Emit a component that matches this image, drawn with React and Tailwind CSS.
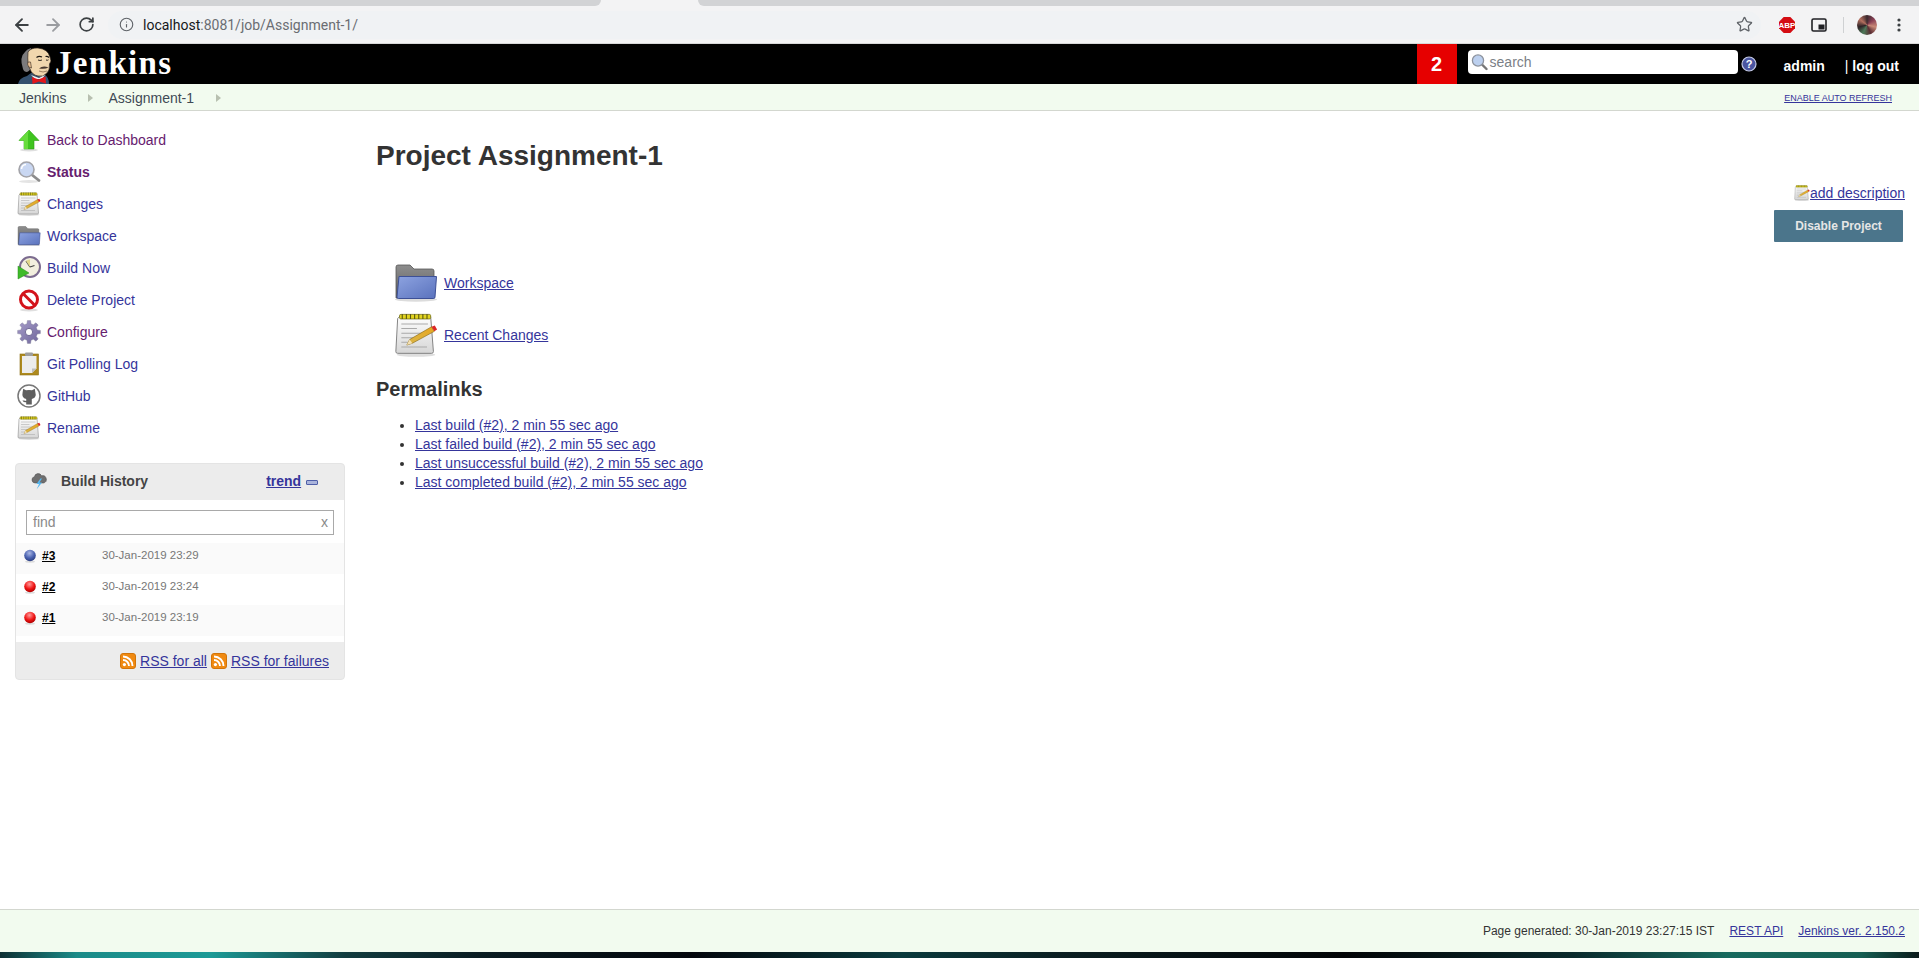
import React from "react";
import { ArrowLeft, ArrowRight, RotateCw, Info, Star } from "lucide-react";

const gearPath = (() => {
  const n = 8, cx = 12, cy = 12, R = 11.5, r = 8.5;
  let d = "";
  for (let i = 0; i < n; i++) {
    const a = (i / n) * Math.PI * 2;
    const s = Math.PI / n;
    const pts = [[r, a - s * 0.62], [R, a - s * 0.36], [R, a + s * 0.36], [r, a + s * 0.62]];
    pts.forEach(([rad, t], j) => {
      d += (i === 0 && j === 0 ? "M" : "L") + (cx + rad * Math.cos(t)).toFixed(2) + " " + (cy + rad * Math.sin(t)).toFixed(2) + " ";
    });
  }
  return d + "Z";
})();

const Notepad = ({ size = 24, className = "" }) => (
  <svg width={size} height={size} viewBox="0 0 48 48" className={className}>
    <defs>
      <linearGradient id="pad" x1="0" y1="0" x2="0" y2="1">
        <stop offset="0" stopColor="#fdfdfd" />
        <stop offset="1" stopColor="#d6d6d6" />
      </linearGradient>
      <linearGradient id="pencil" x1="0" y1="1" x2="1" y2="0">
        <stop offset="0" stopColor="#d9b64a" />
        <stop offset="1" stopColor="#e8a71f" />
      </linearGradient>
    </defs>
    <ellipse cx="24" cy="45.5" rx="21" ry="2.3" fill="#dedede" />
    <path d="M6 4 H40 L43 42 Q43 44 41 44 H4 Q2 44 2 42 L4 6 Z" fill="url(#pad)" stroke="#7a7a7a" strokeWidth="1" />
    <rect x="6" y="1.5" width="34" height="5" rx="1.5" fill="#e2d41f" stroke="#6e6a10" strokeWidth="0.8" />
    <path d="M9 1 V6.5 M13.5 1 V6.5 M18 1 V6.5 M22.5 1 V6.5 M27 1 V6.5 M31.5 1 V6.5 M36 1 V6.5" stroke="#5b5810" strokeWidth="1.2" />
    <path d="M8 12 H37 M8 17 H25 M8 22 H34 M8 27 H22 M8 32 H15 M8 37 H36" stroke="#a9a9a9" strokeWidth="1.1" />
    <path d="M14 35 L17 29 L41 15 L44 20 L20 33 Z" fill="url(#pencil)" stroke="#8a6a16" strokeWidth="0.7" />
    <path d="M14 35 L17 29 L20 33 Z" fill="#f3e0b4" />
    <path d="M41 15 L44 20 L47 18 L44.5 13.5 Z" fill="#dc2626" />
  </svg>
);

const Folder = ({ size = 24, className = "" }) => (
  <svg width={size} height={size * (38 / 44)} viewBox="0 0 44 38" className={className}>
    <defs>
      <linearGradient id="fblue" x1="0" y1="0" x2="1" y2="1">
        <stop offset="0" stopColor="#8da3e0" />
        <stop offset="1" stopColor="#5a72bd" />
      </linearGradient>
      <linearGradient id="fgray" x1="0" y1="0" x2="0" y2="1">
        <stop offset="0" stopColor="#8e8e8e" />
        <stop offset="1" stopColor="#5c5c5c" />
      </linearGradient>
    </defs>
    <ellipse cx="22" cy="35.5" rx="21" ry="2.2" fill="#dcdcdc" />
    <path d="M2 3 Q2 1 4 1 H16 L20 5 H38 Q40 5 40 7 V34 H2 Z" fill="url(#fgray)" stroke="#555" strokeWidth="0.8" />
    <path d="M5 12.5 H42.5 L41 33 Q41 34.5 39.5 34.5 H4.5 Q3 34.5 3 33 Z" fill="url(#fblue)" stroke="#3d5096" strokeWidth="1" />
  </svg>
);

const ArrowUp = () => (
  <svg width="24" height="24" viewBox="0 0 24 24">
    <ellipse cx="12" cy="22" rx="9" ry="1.5" fill="#dfdfdf" />
    <path d="M12 2 L22 12.5 H17 V21 H7 V12.5 H2 Z" fill="#3fc41f" stroke="#2f9c17" strokeWidth="0.6" />
    <path d="M12 2 L2 12.5 H7 V21 H11 V6 Z" fill="#66dc3c" />
  </svg>
);

const Magnifier = () => (
  <svg width="24" height="24" viewBox="0 0 24 24">
    <ellipse cx="12" cy="21.5" rx="10" ry="1.5" fill="#e4e4e4" />
    <path d="M14.5 14.5 L22 20.5" stroke="#8c8c8c" strokeWidth="2.8" strokeLinecap="round" />
    <circle cx="9.5" cy="9.5" r="7.5" fill="#c9d7f2" stroke="#a3a3a8" strokeWidth="1.6" />
    <path d="M4.5 9 A5 5 0 0 1 9 4.5" stroke="#fff" strokeWidth="1.5" fill="none" />
  </svg>
);

const BuildNow = () => (
  <svg width="24" height="24" viewBox="0 0 24 24">
    <circle cx="13" cy="11" r="10" fill="#f2efde" stroke="#7c6c8f" strokeWidth="2" />
    <path d="M13 11 L9 5 M13 11 L17.5 9.5" stroke="#444" strokeWidth="1.2" />
    <path d="M13 11 L9 5 A7.5 7.5 0 0 1 13 3.5 Z" fill="#e2d88c" />
    <path d="M1 10 L12 17 L1 23 Z" fill="#3fbb2a" stroke="#2a8a1c" strokeWidth="0.5" />
  </svg>
);

const DeleteIcon = () => (
  <svg width="24" height="24" viewBox="0 0 24 24">
    <ellipse cx="12" cy="22" rx="9" ry="1.5" fill="#dfdfdf" />
    <circle cx="12" cy="11.5" r="8.5" fill="#fff" stroke="#d3131b" strokeWidth="3" />
    <path d="M6 5.5 L18 17.5" stroke="#d3131b" strokeWidth="3" />
  </svg>
);

const Gear = () => (
  <svg width="24" height="24" viewBox="0 0 24 24">
    <defs>
      <linearGradient id="gear" x1="0" y1="0" x2="1" y2="1">
        <stop offset="0" stopColor="#a69cc9" />
        <stop offset="1" stopColor="#6f669b" />
      </linearGradient>
    </defs>
    <path d={gearPath} fill="url(#gear)" stroke="#7d7d96" strokeWidth="0.4" />
    <circle cx="12" cy="12" r="3.6" fill="#fff" stroke="#5d5585" strokeWidth="0.8" />
  </svg>
);

const Clipboard = () => (
  <svg width="24" height="24" viewBox="0 0 24 24">
    <rect x="3" y="2" width="18.5" height="21" fill="#ae8a1e" stroke="#8c6f14" strokeWidth="0.6" />
    <path d="M5 4 H19.5 V16.5 L15 21 H5 Z" fill="#ececec" />
    <path d="M15 21 L19.5 16.5 H15 Z" fill="#bdbdbd" />
    <rect x="8" y="0.5" width="8" height="3.5" rx="1" fill="#9e9e9e" />
  </svg>
);

const Github = () => (
  <svg width="24" height="24" viewBox="0 0 24 24">
    <circle cx="12" cy="12" r="11" fill="#fff" stroke="#777" strokeWidth="1.5" />
    <path d="M6.2 4.8 L9 6.3 Q12 5.6 15 6.3 L17.8 4.8 L18.4 8.4 Q19.6 12.8 16 14.6 L14.8 15 V20.5 H9.2 V18.2 Q6.8 18.6 5.4 16.4 L7 16.6 L9.2 17 V15 Q4.4 13.8 5.6 8.4 Z" fill="#5f5f5f" />
  </svg>
);

const Weather = () => (
  <svg width="16" height="18" viewBox="0 0 16 18">
    <path d="M4 11 A3.2 3.2 0 0 1 3.4 4.7 A3.8 3.8 0 0 1 10.6 3.8 A3.4 3.4 0 0 1 12.6 11 Z" fill="#6f6f6f" stroke="#444" strokeWidth="0.5" />
    <path d="M9.5 6.5 L5.5 12 H8 L5.5 17.5 L11 10.5 H8.5 L11 6.5 Z" fill="#55b8f2" />
  </svg>
);

const Rss = () => (
  <svg width="16" height="16" viewBox="0 0 16 16" className="shrink-0">
    <rect x="0.5" y="0.5" width="15" height="15" rx="2.5" fill="#f08a12" stroke="#d2750a" />
    <circle cx="4.4" cy="11.6" r="1.6" fill="#fff" />
    <path d="M3 7 A6 6 0 0 1 9 13 M3 3.5 A9.5 9.5 0 0 1 12.5 13" stroke="#fff" strokeWidth="1.9" fill="none" />
  </svg>
);

const Ball = ({ color }) => {
  const pal = color === "blue" ? ["#aab7e4", "#4a62b0", "#2b3d80"] : ["#ff9a9a", "#f01414", "#ab0000"];
  return (
    <svg width="12" height="14" viewBox="0 0 12 14" className="shrink-0">
      <defs>
        <radialGradient id={"ball" + color} cx="0.45" cy="0.3" r="0.7">
          <stop offset="0" stopColor={pal[0]} />
          <stop offset="0.6" stopColor={pal[1]} />
          <stop offset="1" stopColor={pal[2]} />
        </radialGradient>
      </defs>
      <ellipse cx="6" cy="12.6" rx="5" ry="1.2" fill="#dcdcdc" />
      <circle cx="6" cy="6.5" r="5.8" fill={"url(#ball" + color + ")"} />
    </svg>
  );
};

const JenkinsHead = () => (
  <svg width="33" height="40" viewBox="0 0 33 40" className="shrink-0">
    <path d="M0 40 Q1 34 9 32 L13 29 L26 30 Q31 33 31 40 Z" fill="#34506e" />
    <path d="M5 25 Q1 13 7 8 Q9 5 13 4 L14 22 Q12 27 9 28 Q6 28 5 25 Z" fill="#7b7a7c" />
    <path d="M10 8 Q13 3.5 20 4 Q30 5 32 13 L33 17 L31.5 20 Q32 26 29 29 Q25 33.5 20 32 Q14 31 12 25 Q9 21 10 8 Z" fill="#f1d7ae" stroke="#30261f" strokeWidth="0.7" />
    <path d="M12.5 18 Q9.5 17 9.5 20 Q10 24 13.5 24 Z" fill="#e8bf92" stroke="#30261f" strokeWidth="0.6" />
    <path d="M18.5 13.5 Q21 11.5 24 13 M27.5 12.5 Q29.5 12 31 13.5" stroke="#1d1712" strokeWidth="1.1" fill="none" />
    <path d="M20 16 Q22 17 24 16 M28 16 Q29.5 16.6 30.5 15.8" stroke="#1d1712" strokeWidth="0.9" fill="none" />
    <path d="M21 24.5 Q25 21 30.5 23.5 Q27 25.5 21 24.5 Z" fill="#4a3a30" />
    <path d="M21 27 Q25 29 29 27" stroke="#7a5a40" strokeWidth="0.7" fill="none" />
    <path d="M13 31 L21 34 L27 31 L24 35 L17 35 Z" fill="#f3f3f3" />
    <path d="M14 33 L20.5 35.5 L27.5 32.5 L28 39.5 L21 37.5 L14.5 40 Z" fill="#e3161b" />
  </svg>
);

const Crumb = () => <span className="inline-block align-middle w-0 h-0 border-y-[4px] border-y-transparent border-l-[5px] border-l-[#b8c0b0]" />;

const LINK = "text-[#35359b]";
const VISITED = "text-[#66206e]";

const side = [
  [<ArrowUp />, "Back to Dashboard", VISITED],
  [<Magnifier />, "Status", VISITED + " font-bold"],
  [<Notepad />, "Changes", LINK],
  [<Folder size={24} />, "Workspace", LINK],
  [<BuildNow />, "Build Now", LINK],
  [<DeleteIcon />, "Delete Project", LINK],
  [<Gear />, "Configure", VISITED],
  [<Clipboard />, "Git Polling Log", LINK],
  [<Github />, "GitHub", LINK],
  [<Notepad />, "Rename", LINK],
];

const builds = [
  ["blue", "#3", "30-Jan-2019 23:29", "bg-[#fafafa]"],
  ["red", "#2", "30-Jan-2019 23:24", "bg-white"],
  ["red", "#1", "30-Jan-2019 23:19", "bg-[#fafafa]"],
];

const perma = [
  "Last build (#2), 2 min 55 sec ago",
  "Last failed build (#2), 2 min 55 sec ago",
  "Last unsuccessful build (#2), 2 min 55 sec ago",
  "Last completed build (#2), 2 min 55 sec ago",
];

export default function App() {
  return (
    <div className="h-[958px] flex flex-col overflow-hidden bg-white text-[#333] font-['Liberation_Sans',Arial,sans-serif] text-sm">
      {/* tab strip */}
      <div className="h-[6px] flex bg-[#f3f3f4]">
        <div className="w-[601px] bg-[#d2d3d5] rounded-br-[6px]" />
        <div className="w-[97px]" />
        <div className="flex-1 bg-[#d2d3d5] rounded-bl-[6px]" />
      </div>
      {/* toolbar */}
      <div className="h-[38px] flex items-center bg-[#f3f3f4] border-b border-[#d8d8d8] pl-[12px]">
        <ArrowLeft size={20} strokeWidth={2.2} className="text-[#3c4043] shrink-0" />
        <ArrowRight size={20} strokeWidth={2.2} className="text-[#9a9ca0] ml-[11px] shrink-0" />
        <RotateCw size={17} strokeWidth={2.4} className="text-[#3c4043] ml-[15px] shrink-0" />
        <div className="ml-[13px] w-[1653px] h-[28px] rounded-full bg-[#f0f2f4] flex items-center pl-[11px] pr-[8px]">
          <Info size={15} strokeWidth={1.8} className="text-[#5f6368] shrink-0" />
          <span className="ml-[9px] font-['Roboto',sans-serif] text-[14px] text-[#6a6d72] leading-none">
            <span className="text-[#15171a]">localhost</span>:8081/job/Assignment-1/
          </span>
          <Star size={17} strokeWidth={1.8} className="ml-auto text-[#5f6368] shrink-0" />
        </div>
        <svg width="16" height="16" viewBox="0 0 16 16" className="ml-[18px] shrink-0">
          <path d="M4.7 0 H11.3 L16 4.7 V11.3 L11.3 16 H4.7 L0 11.3 V4.7 Z" fill="#d40c12" />
          <text x="8" y="11" textAnchor="middle" fontSize="8" fontWeight="700" fill="#fff" fontFamily="Liberation Sans">ABP</text>
        </svg>
        <svg width="16" height="14" viewBox="0 0 16 14" className="ml-[16px] shrink-0">
          <rect x="1" y="1" width="14" height="12" rx="1.5" fill="none" stroke="#202124" strokeWidth="1.6" />
          <rect x="7.5" y="6.5" width="6" height="5" fill="#202124" />
        </svg>
        <div className="ml-[16px] w-px h-[16px] bg-[#cfd1d3]" />
        <div className="ml-[13px] w-[20px] h-[20px] rounded-full bg-[conic-gradient(#3b2a2e,#8a3f55,#c98a78,#5b2d34,#4e7a5a,#2d2226,#b5705f,#3b2a2e)] shrink-0" />
        <svg width="4" height="14" viewBox="0 0 4 14" className="ml-[20px] shrink-0">
          <circle cx="2" cy="2" r="1.6" fill="#3c4043" />
          <circle cx="2" cy="7" r="1.6" fill="#3c4043" />
          <circle cx="2" cy="12" r="1.6" fill="#3c4043" />
        </svg>
      </div>
      {/* header */}
      <div className="h-[40px] bg-black flex items-end pl-[18px] text-white shrink-0">
        <JenkinsHead />
        <span className="self-center ml-[4px] mb-[2px] font-['Liberation_Serif',serif] font-bold text-[33px] tracking-[1.3px] leading-none">Jenkins</span>
        <div className="ml-auto self-stretch flex items-center">
          <div className="w-[40px] h-full bg-[#e60000] flex items-center justify-center text-[20px] font-bold">2</div>
          <div className="ml-[11px] mb-[4px] w-[270px] h-[24px] rounded-[4px] bg-white flex items-center pl-[3px]">
            <svg width="17" height="18" viewBox="0 0 17 18" className="shrink-0">
              <path d="M10.5 11 L15.5 16" stroke="#777" strokeWidth="2.4" strokeLinecap="round" />
              <circle cx="7" cy="7.5" r="5.6" fill="#bcd0ef" stroke="#8d939e" strokeWidth="1.3" />
            </svg>
            <span className="ml-[2px] text-sm text-[#7b7f86]">search</span>
          </div>
          <svg width="16" height="16" viewBox="0 0 16 16" className="ml-[3px] shrink-0">
            <circle cx="8" cy="8" r="7" fill="#4a55a0" stroke="#c5cbe6" strokeWidth="1.2" />
            <text x="8" y="12" textAnchor="middle" fontSize="11" fontWeight="700" fill="#fff" fontFamily="Liberation Sans">?</text>
          </svg>
          <span className="ml-[27px] font-bold text-sm mt-[4px]">admin</span>
          <span className="ml-[20px] mr-[20px] font-bold text-sm mt-[4px]"><span className="font-normal">|</span> log out</span>
        </div>
      </div>
      {/* breadcrumb */}
      <div className="h-[27px] bg-[#f2fbef] border-b border-[#d3d7cf] flex items-center pt-[2px] pl-[19px] pr-[27px] shrink-0 text-[#3f4a55]">
        <span>Jenkins</span>
        <span className="ml-[22px] flex"><Crumb /></span>
        <span className="ml-[15px]">Assignment-1</span>
        <span className="ml-[22px] flex"><Crumb /></span>
        <a className={"ml-auto text-[9px] underline " + LINK}>ENABLE AUTO REFRESH</a>
      </div>
      {/* content */}
      <div className="flex-1 flex min-h-0">
        <aside className="w-[375px] shrink-0 pt-[13px] pl-[15px]">
          <div className="flex flex-col">
            {side.map(([icon, label, color], i) => (
              <div key={i} className="h-[32px] flex items-center">
                <span className="ml-[2px] w-[24px] h-[24px] flex items-center justify-center shrink-0">{icon}</span>
                <span className={"ml-[6px] " + color}>{label}</span>
              </div>
            ))}
          </div>
          <div className="mt-[19px] w-[330px] h-[217px] rounded-[4px] bg-[#ececec] border border-[#e4e4e4] flex flex-col overflow-hidden">
            <div className="h-[36px] flex items-center shrink-0 pl-[15px] pb-[2px]">
              <Weather />
              <span className="ml-[14px] font-bold text-[#444]">Build History</span>
              <a className={"ml-[118px] font-bold underline " + LINK}>trend</a>
              <span className="ml-[5px] w-[12px] h-[5px] mt-[2px] rounded-[1px] bg-[#aab4dc] border border-[#4f5fa8]" />
            </div>
            <div className="flex-1 bg-white flex flex-col">
              <div className="mx-[10px] mt-[10px] h-[25px] border border-[#a9a9a9] flex items-center justify-between pl-[6px] pr-[5px] pb-[2px] text-[#8a8a8a] text-sm">
                <span>find</span>
                <span>x</span>
              </div>
              <div className="mt-[8px] flex flex-col">
                {builds.map(([c, n, d, bg]) => (
                  <div key={n} className={"h-[31px] flex items-center pl-[8px] pb-[6px] " + bg}>
                    <Ball color={c} />
                    <a className="ml-[6px] w-[60px] text-xs font-bold underline text-black">{n}</a>
                    <span className="text-[11.5px] text-[#777]">{d}</span>
                  </div>
                ))}
              </div>
            </div>
            <div className="h-[37px] shrink-0 flex items-center justify-end pr-[15px]">
              <Rss />
              <a className={"ml-[4px] underline " + LINK}>RSS for all</a>
              <span className="ml-[4px]"><Rss /></span>
              <a className={"ml-[4px] underline " + LINK}>RSS for failures</a>
            </div>
          </div>
        </aside>
        <main className="flex-1 min-w-0 pr-[14px]">
          <h1 className="mt-[28px] ml-px text-[28px] leading-[34px] font-bold text-[#333]">Project Assignment-1</h1>
          <div className="mt-[10px] flex flex-col items-end">
            <div className="flex items-center h-[20px]">
              <Notepad size={16} />
              <a className={"underline " + LINK}>add description</a>
            </div>
            <div className="mt-[7px] mr-[2px] w-[129px] h-[32px] rounded-[1px] bg-[#4b758b] flex items-center justify-center text-xs font-bold text-[#e6e6e6]">Disable Project</div>
          </div>
          <div className="mt-[22px] ml-[19px] flex items-center h-[38px]">
            <Folder size={44} />
            <a className={"ml-[6px] underline " + LINK}>Workspace</a>
          </div>
          <div className="mt-[11px] ml-[19px] flex items-center h-[44px]">
            <Notepad size={44} />
            <a className={"ml-[6px] underline " + LINK}>Recent Changes</a>
          </div>
          <h2 className="mt-[20px] ml-px text-[20px] leading-[24px] font-bold text-[#333]">Permalinks</h2>
          <ul className="mt-[15px] ml-[40px] list-disc leading-[19px]">
            {perma.map((p) => (
              <li key={p}><a className={"underline " + LINK}>{p}</a></li>
            ))}
          </ul>
        </main>
      </div>
      {/* footer */}
      <div className="h-[43px] bg-[#f2fbef] border-t border-[#d3d7cf] flex items-center justify-end pr-[14px] text-xs shrink-0">
        <span className="text-[#333]">Page generated: 30-Jan-2019 23:27:15 IST</span>
        <a className={"ml-[15px] underline " + LINK}>REST API</a>
        <a className={"ml-[15px] underline " + LINK}>Jenkins ver. 2.150.2</a>
      </div>
      {/* desktop wallpaper */}
      <div className="h-[6px] shrink-0 bg-[linear-gradient(90deg,#0e2f33_0%,#1b8b88_4%,#1c9a96_11%,#123c3f_18%,#0a1c22_25%,#03060c_36%,#0a3a3d_47%,#0b1f22_55%,#020406_70%,#0a2a2c_82%,#176a5e_90%,#155e52_97%,#0a1a1a_100%)]" />
    </div>
  );
}
